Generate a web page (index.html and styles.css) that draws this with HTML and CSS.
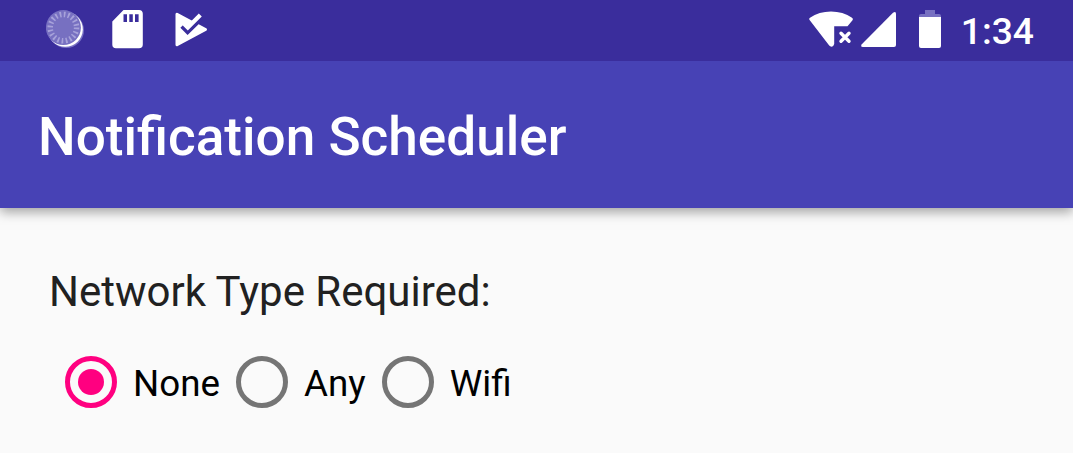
FILE: index.html
```
<!DOCTYPE html>
<html lang="en">
<head>
<meta charset="utf-8">
<title>Notification Scheduler</title>
<link rel="stylesheet" href="styles.css">
</head>
<body>
<div class="status-bar">
  <div class="status-left">
    <svg width="40" height="40" viewBox="0 0 40 40">
      <circle cx="20.200" cy="20.200" r="17.800" fill="#7770c4"/>
      <circle cx="19.200" cy="19.200" r="17.600" fill="#fff"/>
      <circle cx="17.400" cy="17.600" r="17.500" fill="#7770c1"/>
      <circle cx="17.400" cy="17.600" r="13.200" fill="none" stroke="#a7a2da" stroke-width="5.500" stroke-dasharray="1.700 2.447"/>
    </svg>
    <svg width="31" height="39" viewBox="0 0 31 39">
      <path fill="#fff" fill-rule="evenodd" d="M11.5 0H27Q30.800 0 30.800 3.800V34.500Q30.800 38.300 27 38.300H4Q.3 38.300 .3 34.500V11.500ZM11.500 4.300V12H15V4.300ZM17.300 4.300V12H20.800V4.300ZM23 4.300V12H26.600V4.300Z"/>
    </svg>
    <svg width="33" height="36" viewBox="0 0 33 36">
      <path fill="#fff" stroke="#fff" stroke-width="3" stroke-linejoin="round" d="M2 2.300V32.700L30.500 17.500Z"/>
      <path fill="none" stroke="#3a2d9c" stroke-width="4" d="M6.800 14.300L12.600 20.100L25 8"/>
      <path fill="none" stroke="#fff" stroke-width="4.200" d="M9.300 12L12.800 15.500L25.300 3"/>
    </svg>
  </div>
  <div class="status-right">
    <svg class="wifi" width="45" height="37" viewBox="0 0 45 37">
      <path fill="#fff" d="M.6 9Q-.3 7.700 1 6.700Q10 .4 22 .4T43 6.700Q44.500 7.700 43.500 9.200L38.500 15.300H25.200V33L24.200 35Q22 36.500 20.200 34.600Z"/>
      <path fill="none" stroke="#fff" stroke-width="3.400" stroke-linecap="round" d="M32 22.200L40 30.200M40 22.200L32 30.200"/>
    </svg>
    <svg class="signal" width="35" height="35" viewBox="0 0 35 35">
      <path fill="#fff" d="M32 .8Q35 -1 35 1.800V33Q35 35 33 35H2Q-1 35 .8 32.300Z"/>
    </svg>
    <svg class="battery" width="22" height="38" viewBox="0 0 22 38">
      <path fill="#7770c1" d="M6 0H16V4H20Q22 4 22 6V7.500H0V6Q0 4 2 4H6Z"/>
      <path fill="#fff" d="M0 7H22V36Q22 38 20 38H2Q0 38 0 36Z"/>
    </svg>
    <span class="clock">1:34</span>
  </div>
</div>
<header class="app-bar"><h1 class="app-title">Notification Scheduler</h1></header>
<main class="content">
  <p class="label">Network Type Required:</p>
  <div class="radio-group" role="radiogroup">
    <div class="radio checked" role="radio" aria-checked="true"><span class="ring"></span><span class="radio-text">None</span></div>
    <div class="radio" role="radio" aria-checked="false"><span class="ring"></span><span class="radio-text">Any</span></div>
    <div class="radio" role="radio" aria-checked="false"><span class="ring"></span><span class="radio-text">Wifi</span></div>
  </div>
</main>
</body>
</html>
```
FILE: styles.css
```
* { box-sizing: border-box; }
body {
  margin: 0;
  height: 453px;
  overflow: hidden;
  background: #fafafa;
  font-family: Roboto, sans-serif;
}
svg { display: block; flex: none; }
.status-bar {
  position: relative;
  z-index: 1;
  height: 61px;
  padding: 10px 39px 0 46px;
  display: flex;
  justify-content: space-between;
  background: #3a2d9c;
  color: #fff;
}
.status-left { display: flex; gap: 26px; }
.status-left svg:nth-child(3) { margin: 2px 0 0 6px; }
.status-right { display: flex; }
.wifi { margin-top: 1px; }
.signal { margin: 2px 0 0 7px; }
.battery { margin-left: 23px; }
.clock {
  margin-left: 20px;
  font-size: 37.2px;
  font-weight: 500;
  line-height: 43px;
}
.app-bar {
  height: 147px;
  padding: 5px 38px 0;
  display: flex;
  align-items: center;
  background: #4742b5;
  color: #fff;
  box-shadow: 0 4px 11px rgba(0, 0, 0, .36);
}
.app-title {
  margin: 0;
  font-size: 53.1px;
  font-weight: 500;
  line-height: 62px;
}
.content { padding: 59px 49px 0; }
.label {
  margin: 0;
  font-size: 42px;
  line-height: 50px;
  color: #212121;
}
.radio-group {
  display: flex;
  gap: 16px;
  margin: 39px 0 0 16px;
}
.radio {
  display: flex;
  align-items: center;
  gap: 16px;
  height: 52px;
}
.ring {
  display: flex;
  align-items: center;
  justify-content: center;
  width: 52px;
  height: 52px;
  border: 5px solid #757575;
  border-radius: 50%;
}
.checked .ring { border-color: #ff0080; }
.checked .ring::after {
  content: "";
  width: 26px;
  height: 26px;
  border-radius: 50%;
  background: #ff0080;
}
.radio-text {
  padding-top: 3px;
  font-size: 36.75px;
  line-height: 43px;
  color: #000;
}
```
